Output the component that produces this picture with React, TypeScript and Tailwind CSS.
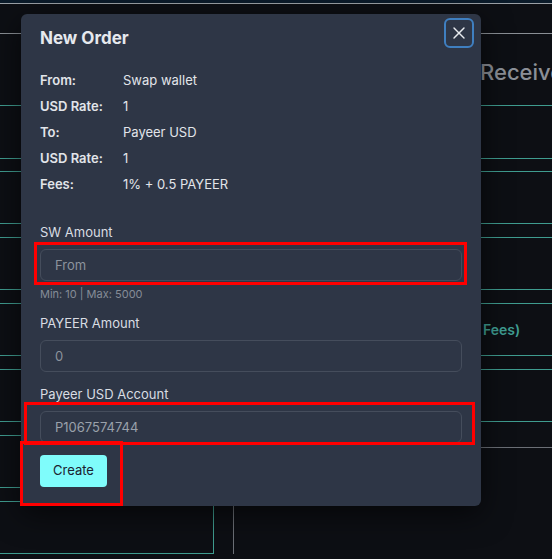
import { X } from "lucide-react";

const leftRows = [72, 53, 13, 52, 14, 52, 14, 52, 14, 52, 14, 52, 14, 52];
const rightRows = [72, 53, 13, 52, 14, 52, 14, 52, 14, 52];

function LeftRows() {
  return (
    <div className="flex w-[214px] flex-col border-r border-[#3f9c8f]">
      {leftRows.map((h, i) => (
        <div key={i} className="border-b border-[#3f9c8f]" style={{ height: h }} />
      ))}
    </div>
  );
}

function RightRows() {
  return (
    <div className="flex flex-1 flex-col border-l border-[#6b6f76]">
      {rightRows.map((h, i) => (
        <div key={i} className="relative border-b border-[#3f9c8f]" style={{ height: h }}>
          {i === 0 && (
            <span className="absolute left-[246px] top-[22px] whitespace-nowrap text-[22px] font-medium text-[#8b8f97]">
              Receive
            </span>
          )}
          {i === 7 && (
            <span className="absolute left-[249px] top-[15px] text-[14px] font-semibold text-[#3f9d92]">
              Fees)
            </span>
          )}
        </div>
      ))}
      <div className="h-[26px] border-b border-[#6b6f76]" />
    </div>
  );
}

function Field({
  label,
  placeholder,
  value,
  hint,
  className = "",
}: {
  label: string;
  placeholder?: string;
  value?: string;
  hint?: string;
  className?: string;
}) {
  return (
    <div className={`flex flex-col ${className}`}>
      <label className="text-[13px] leading-[20px] text-[#d9dde3]">{label}</label>
      <input
        readOnly
        placeholder={placeholder}
        defaultValue={value}
        className="mt-[7px] h-[32px] w-[422px] rounded-[6px] border border-[#454d5c] bg-[#2e3646] px-[14px] text-[13px] text-[#9aa1ab] outline-none placeholder:text-[#8c939d]"
      />
      {hint && <p className="mt-[5px] text-[11px] leading-[16px] text-[#858c97]">{hint}</p>}
    </div>
  );
}

export default function App() {
  const info = [
    ["From:", "Swap wallet"],
    ["USD Rate:", "1"],
    ["To:", "Payeer USD"],
    ["USD Rate:", "1"],
    ["Fees:", "1% + 0.5 PAYEER"],
  ];

  return (
    <div
      className="relative h-[559px] w-[552px] overflow-hidden bg-[#0d0f14]"
      style={{ fontFamily: "Inter, 'Noto Sans', sans-serif" }}
    >
      {/* background table */}
      <div className="h-[4px] border-b border-[#9aa0a6] bg-[#0b1b2a]" />
      <div className="h-[30px] border-b border-[#8a8f95]" />
      <div className="flex gap-[19px]">
        <LeftRows />
        <RightRows />
      </div>

      {/* modal */}
      <div className="absolute left-[21px] top-[14px] h-[492px] w-[460px] rounded-[6px] bg-[#2e3646] px-[19px] pt-[12px] shadow-[0_8px_30px_rgba(0,0,0,0.6)]">
        <button className="absolute right-[7px] top-[4px] flex h-[30px] w-[30px] items-center justify-center rounded-[6px] border-2 border-[#3f7fc0] text-[#e8ebef]">
          <X size={20} strokeWidth={1.7} />
        </button>
        <h2 className="text-[17px] font-bold text-[#e6e9ee]">New Order</h2>

        <div className="mt-[20px] flex flex-col gap-[7px] text-[13px] text-[#e2e5ea]">
          {info.map(([k, v], i) => (
            <div key={i} className="flex h-[19px] items-center">
              <span className="w-[83px] font-semibold">{k}</span>
              <span>{v}</span>
            </div>
          ))}
        </div>

        <Field className="mt-[27px]" label="SW Amount" placeholder="From" hint="Min: 10 | Max: 5000" />
        <Field className="mt-[11px]" label="PAYEER Amount" placeholder="0" />
        <Field className="mt-[12px]" label="Payeer USD Account" value="P1067574744" />

        <button className="mt-[12px] h-[32px] w-[67px] rounded-[4px] bg-[#7ffcfb] text-[13px] text-[#1b2230]">
          Create
        </button>
      </div>

      {/* red annotation boxes */}
      <div className="pointer-events-none absolute left-[34px] top-[242px] h-[43px] w-[433px] border-[3px] border-[#ff0000]" />
      <div className="pointer-events-none absolute left-[24px] top-[402px] h-[43px] w-[451px] border-[3px] border-[#ff0000]" />
      <div className="pointer-events-none absolute left-[20px] top-[441px] h-[65px] w-[103px] border-[3px] border-[#ff0000]" />
    </div>
  );
}
